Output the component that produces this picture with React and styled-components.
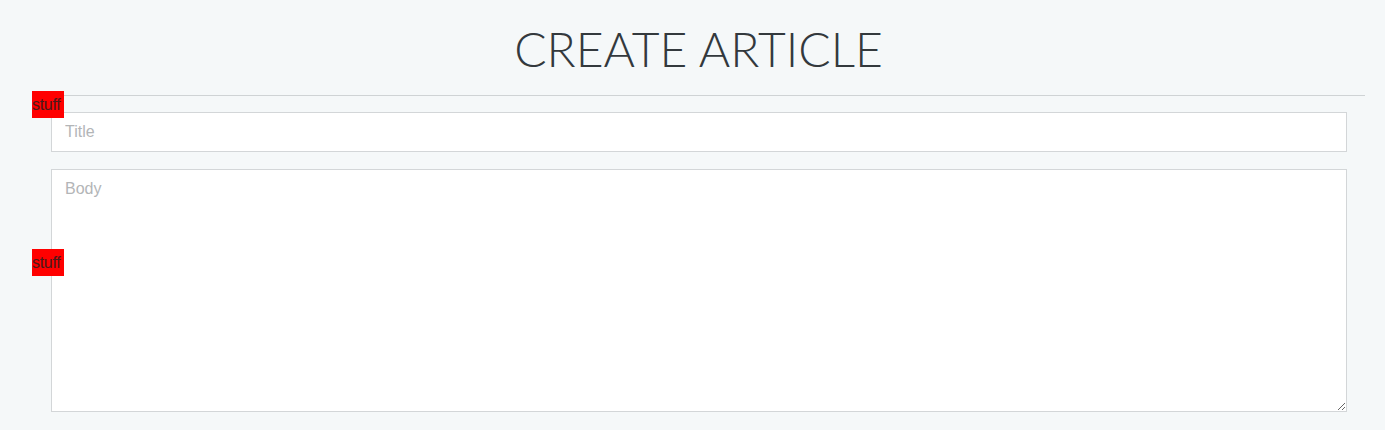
import React from 'react'
import styled, { createGlobalStyle } from 'styled-components'

const GlobalStyle = createGlobalStyle`
  html, body {
    margin: 0;
    padding: 0;
    background: #f5f8f9;
  }
  body {
    font-family: "Liberation Sans", Arial, sans-serif;
  }
`

const Page = styled.div`
  height: 430px;
  padding: 0 20px 0 32px;
  box-sizing: border-box;
  overflow: hidden;
`

const Header = styled.header`
  padding: 19px 0 16px;
  border-bottom: 1px solid #cfd3d5;
`

const Heading = styled.h1`
  margin: 0;
  text-align: center;
  font-family: Lato, "Noto Sans", sans-serif;
  font-weight: 300;
  font-size: 48px;
  line-height: 60px;
  color: #33393d;
`

const Form = styled.form`
  display: flex;
  flex-direction: column;
  gap: 17px;
  padding: 16px 18px 0 19px;
`

const Field = styled.div`
  position: relative;
`

// red debug tags that sit over the fields
const Tag = styled.label`
  position: absolute;
  left: -19px;
  top: ${p => p.$top}px;
  z-index: 1;
  background: #ff0000;
  color: #4a1a1a;
  font-size: 16px;
  line-height: 27px;
  width: 32px;
  overflow: hidden;
  white-space: nowrap;
  letter-spacing: -0.3px;
`

const TextInput = styled.input`
  display: block;
  width: 100%;
  height: 40px;
  box-sizing: border-box;
  border: 1px solid #d3d6d8;
  background: #fff;
  padding: 0 13px;
  font-family: "Liberation Sans", Arial, sans-serif;
  font-size: 16px;
  color: #333;
  outline: none;

  &::placeholder {
    color: #b3b5b7;
  }
`

const TextArea = styled.textarea`
  display: block;
  width: 100%;
  height: 243px;
  box-sizing: border-box;
  border: 1px solid #d3d6d8;
  background: #fff;
  padding: 10px 13px;
  font-family: "Liberation Sans", Arial, sans-serif;
  font-size: 16px;
  color: #333;
  outline: none;
  margin: 0;

  &::placeholder {
    color: #b3b5b7;
  }
`

export default function App() {
  return <Page>
    <GlobalStyle />
    <Header>
      <Heading>CREATE ARTICLE</Heading>
    </Header>
    <Form onSubmit={e => e.preventDefault()}>
      <Field>
        <Tag $top={-21}>stuff</Tag>
        <TextInput type="text" placeholder="Title" />
      </Field>
      <Field>
        <Tag $top={80}>stuff</Tag>
        <TextArea placeholder="Body" />
      </Field>
    </Form>
  </Page>
}
